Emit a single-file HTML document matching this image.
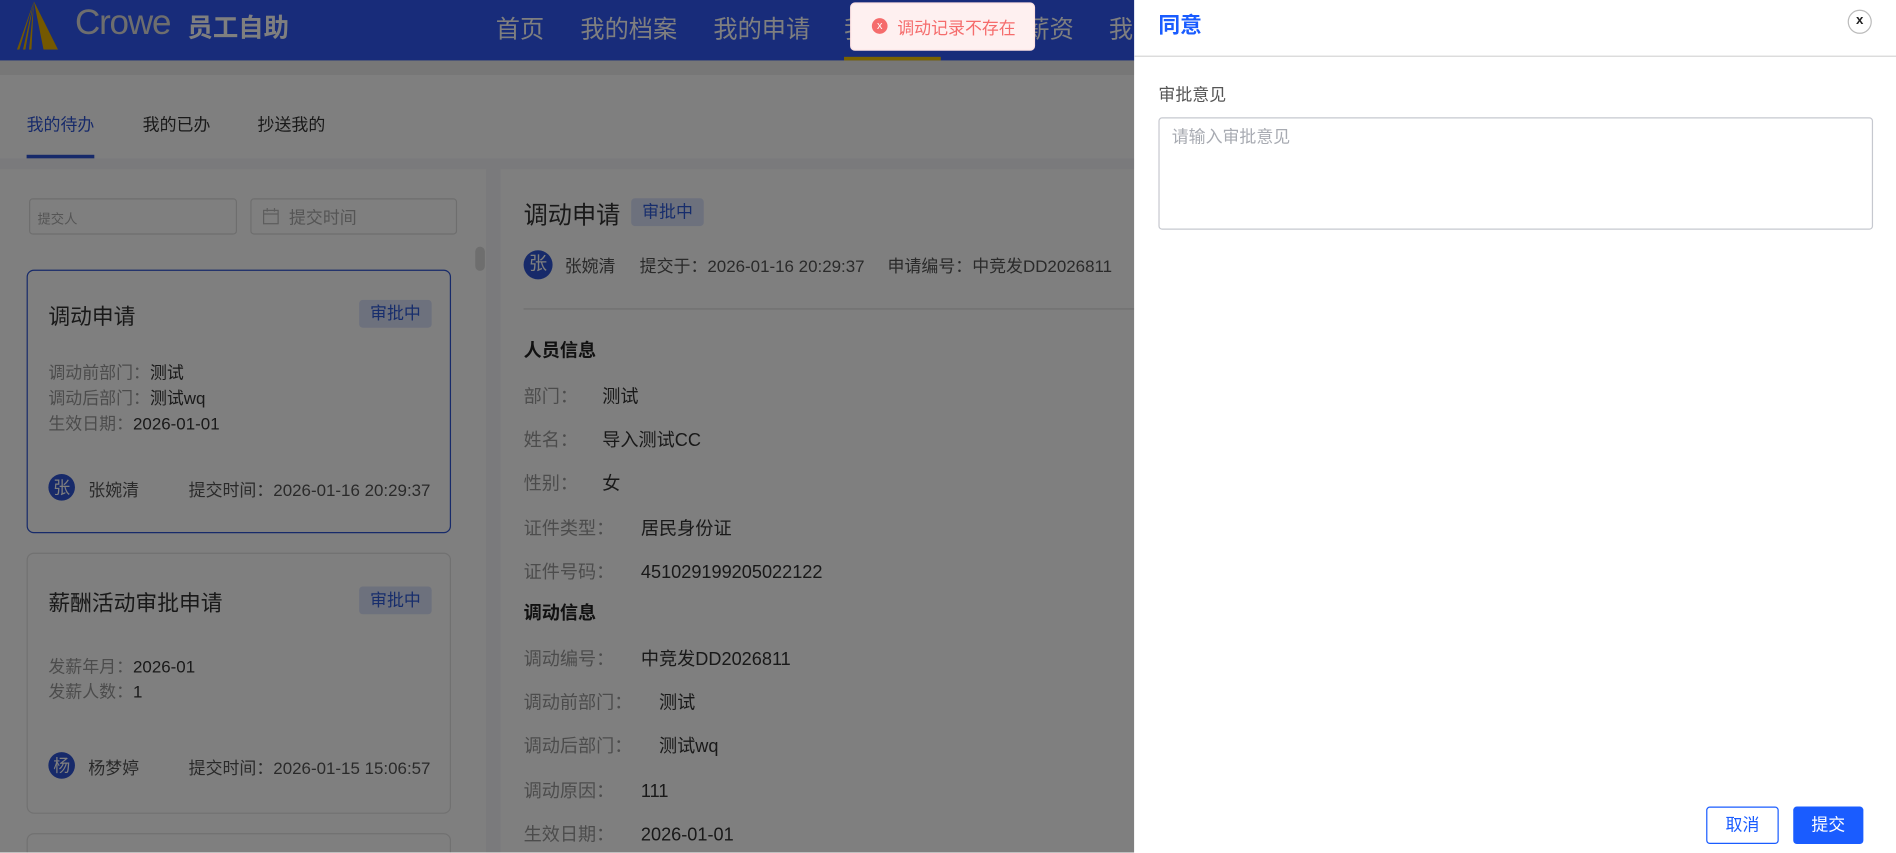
<!DOCTYPE html>
<html><head><meta charset="utf-8"><style>
*{margin:0;padding:0;box-sizing:border-box}
body{width:1896px;height:853px;overflow:hidden;background:#fff;font-family:"Liberation Sans","Noto Sans CJK SC",sans-serif}
#s{position:absolute;left:0;top:0;width:1568px;height:705px;transform:scale(1.2092);transform-origin:0 0;overflow:hidden}
.a{position:absolute;white-space:nowrap}
.hdr{left:0;top:0;width:938px;height:50px;background:#3058f4}
.nav{top:8px;font-size:20px;color:#fff}
.card{position:absolute;left:22px;width:351px;background:#fff;border:1px solid #e2e2e2;border-radius:6px}
.tag{position:absolute;background:#dbe3fb;color:#2e5ad8;font-size:14px;border-radius:3px;text-align:center;line-height:23px}
.lb{color:#999}.vl{color:#333}
.av{position:absolute;width:22px;height:22px;border-radius:50%;background:#2f55d4;color:#fff;font-size:14px;text-align:center;line-height:22px}
.dl{position:absolute;left:433px;font-size:15px;color:#999}
.dl span{color:#333}
</style></head><body><div id="s">
<div class="a hdr"></div>
<svg class="a" style="left:8px;top:1px" width="46" height="40" viewBox="0 0 46 40"><path d="M20 0 L6 40 L8 40 Z M20 0 L11 40 L13 40 Z M20 0 L16 40 L18 40 Z M20 0 L28 40 L40 40 Z" fill="#e8b000"/></svg>
<div class="a" style="left:62px;top:3px;font-size:29px;color:#ddd;letter-spacing:-1px">Crowe</div>
<div class="a" style="left:155px;top:7px;font-size:21px;font-weight:bold;color:#fff">员工自助</div>
<div class="a nav" style="left:410px">首页</div>
<div class="a nav" style="left:480px">我的档案</div>
<div class="a nav" style="left:590px">我的申请</div>
<div class="a nav" style="left:698px">我的审批</div>
<div class="a nav" style="left:848px">薪资</div>
<div class="a nav" style="left:917px">我的</div>
<div class="a" style="left:698px;top:47px;width:80px;height:3px;background:#f3c400"></div>
<div class="a" style="left:0;top:50px;width:938px;height:12px;background:#eee"></div>
<div class="a" style="left:0;top:62px;width:938px;height:643px;background:#fff"></div>
<div class="a" style="left:22px;top:93px;font-size:14px;color:#2f55d4">我的待办</div>
<div class="a" style="left:118px;top:93px;font-size:14px;color:#333">我的已办</div>
<div class="a" style="left:213px;top:93px;font-size:14px;color:#333">抄送我的</div>
<div class="a" style="left:22px;top:128px;width:56px;height:3px;background:#2f55d4"></div>
<div class="a" style="left:0;top:131px;width:938px;height:9px;background:#f4f5f8"></div>
<div class="a" style="left:402px;top:140px;width:12px;height:565px;background:#f4f5f8"></div>
<div class="a" style="left:393px;top:204px;width:8px;height:20px;background:#ddd;border-radius:4px"></div>
<div class="a" style="left:24px;top:164px;width:172px;height:30px;border:1px solid #ddd;border-radius:3px;font-size:11px;color:#aaa;padding:8px 6px">提交人</div>
<div class="a" style="left:207px;top:164px;width:171px;height:30px;border:1px solid #ddd;border-radius:3px;font-size:14px;color:#aaa;padding:5px 0 0 31px">提交时间</div>
<svg class="a" style="left:217px;top:172px" width="14" height="14" viewBox="0 0 14 14"><rect x="1" y="2" width="12" height="11" fill="none" stroke="#bbb"/><path d="M1 5h12M4 0v3M10 0v3" stroke="#bbb"/></svg>
<div class="card" style="top:223px;height:218px;border-color:#2f55d4">
<div class="a" style="left:17px;top:24px;font-size:18px;color:#333">调动申请</div>
<div class="tag" style="left:274px;top:24px;width:60px">审批中</div>
<div class="a" style="left:17px;top:74px;font-size:14px;line-height:21px"><span class="lb">调动前部门：</span><span class="vl">测试</span><br><span class="lb">调动后部门：</span><span class="vl">测试wq</span><br><span class="lb">生效日期：</span><span class="vl">2026-01-01</span></div>
<div class="av" style="left:17px;top:168px">张</div>
<div class="a" style="left:50px;top:171px;font-size:14px;color:#555">张婉清</div>
<div class="a" style="right:16px;top:171px;font-size:14px;color:#555">提交时间：2026-01-16 20:29:37</div>
</div>
<div class="card" style="top:457px;height:216px">
<div class="a" style="left:17px;top:27px;font-size:18px;color:#333">薪酬活动审批申请</div>
<div class="tag" style="left:274px;top:27px;width:60px">审批中</div>
<div class="a" style="left:17px;top:83px;font-size:14px;line-height:21px"><span class="lb">发薪年月：</span><span class="vl">2026-01</span><br><span class="lb">发薪人数：</span><span class="vl">1</span></div>
<div class="av" style="left:17px;top:164px">杨</div>
<div class="a" style="left:50px;top:167px;font-size:14px;color:#555">杨梦婷</div>
<div class="a" style="right:16px;top:167px;font-size:14px;color:#555">提交时间：2026-01-15 15:06:57</div>
</div>
<div class="card" style="top:689px;height:40px"></div>
<div class="a" style="left:433px;top:162px;font-size:20px;color:#333">调动申请</div>
<div class="tag" style="left:522px;top:164px;width:60px">审批中</div>
<div class="av" style="left:433px;top:207px;width:24px;height:24px;line-height:24px;font-size:15px">张</div>
<div class="a" style="left:467px;top:210px;font-size:14px;color:#555">张婉清</div>
<div class="a" style="left:529px;top:210px;font-size:14px;color:#555">提交于：2026-01-16 20:29:37</div>
<div class="a" style="left:734px;top:210px;font-size:14px;color:#555">申请编号：中竞发DD2026811</div>
<div class="a" style="left:433px;top:255px;width:505px;height:1px;background:#ddd"></div>
<div class="a" style="left:433px;top:279px;font-size:15px;font-weight:bold;color:#222">人员信息</div>
<div class="a dl" style="top:317px">部门：<span style="margin-left:20px">测试</span></div>
<div class="a dl" style="top:353px">姓名：<span style="margin-left:20px">导入测试CC</span></div>
<div class="a dl" style="top:389px">性别：<span style="margin-left:20px">女</span></div>
<div class="a dl" style="top:426px">证件类型：<span style="margin-left:22px">居民身份证</span></div>
<div class="a dl" style="top:462px">证件号码：<span style="margin-left:22px">451029199205022122</span></div>
<div class="a" style="left:433px;top:496px;font-size:15px;font-weight:bold;color:#222">调动信息</div>
<div class="a dl" style="top:534px">调动编号：<span style="margin-left:22px">中竞发DD2026811</span></div>
<div class="a dl" style="top:570px">调动前部门：<span style="margin-left:22px">测试</span></div>
<div class="a dl" style="top:606px">调动后部门：<span style="margin-left:22px">测试wq</span></div>
<div class="a dl" style="top:643px">调动原因：<span style="margin-left:22px">111</span></div>
<div class="a dl" style="top:679px">生效日期：<span style="margin-left:22px">2026-01-01</span></div>
<div class="a" style="left:0;top:0;width:938px;height:705px;background:rgba(0,0,0,.5)"></div>
<div class="a" style="left:703px;top:2px;width:153px;height:40px;background:#fef0f0;border:1px solid #fde2e2;border-radius:4px"></div>
<div class="a" style="left:721px;top:15px;width:13px;height:13px;border-radius:50%;background:#f56c6c;color:#fff;font-size:9px;text-align:center;line-height:13px">x</div>
<div class="a" style="left:742px;top:13px;font-size:14px;color:#f56c6c">调动记录不存在</div>
<div class="a" style="left:938px;top:0;width:630px;height:705px;background:#fff"></div>
<div class="a" style="left:958px;top:7px;font-size:18px;font-weight:bold;color:#1a5cff">同意</div>
<div class="a" style="left:1528px;top:8px;width:20px;height:20px;border-radius:50%;border:1.5px solid #bbb;text-align:center;font-size:11px;font-weight:bold;line-height:17px;color:#222">x</div>
<div class="a" style="left:938px;top:46px;width:630px;height:1px;background:#d5d5d5"></div>
<div class="a" style="left:958px;top:68px;font-size:14px;color:#555">审批意见</div>
<div class="a" style="left:958px;top:97px;width:591px;height:93px;border:1px solid #c6c8cf;border-radius:3px;font-size:14px;color:#a8abb2;padding:5px 10px">请输入审批意见</div>
<div class="a" style="left:1411px;top:667px;width:60px;height:31px;border:1px solid #1a5cff;border-radius:3px;color:#1a5cff;font-size:14px;text-align:center;line-height:29px">取消</div>
<div class="a" style="left:1483px;top:667px;width:58px;height:31px;background:#1a5cff;border-radius:3px;color:#fff;font-size:14px;text-align:center;line-height:31px">提交</div>
</div></body></html>
